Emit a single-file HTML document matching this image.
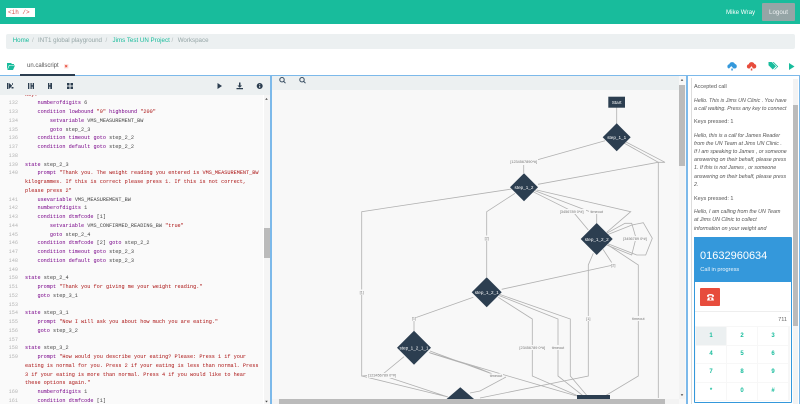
<!DOCTYPE html>
<html><head><meta charset="utf-8">
<style>
html,body{margin:0;padding:0;width:800px;height:404px;overflow:hidden;background:#fff;font-family:"Liberation Sans",sans-serif;}
.a{position:absolute;}
.t{position:absolute;white-space:nowrap;line-height:10px;}
#code{position:absolute;left:0;top:95px;width:263px;height:309px;overflow:hidden;background:#fafafa;font:5.2px/8.75px "Liberation Mono",monospace;color:#444;}
#code .in{position:absolute;left:0;top:-4.3px;width:263px;}
#code .r{position:relative;height:8.75px;white-space:pre;padding-left:25px;}
#code .r u{position:absolute;left:0;width:18px;text-align:right;text-decoration:none;color:#b5b5b5;}
#code b{font-weight:normal;color:#708;}
#code i{font-style:normal;color:#a11;}
.cell{position:absolute;background:#fff;color:#18bc9c;font-size:6px;font-weight:bold;text-align:center;}
.p{position:absolute;left:694px;white-space:nowrap;font-size:5.3px;line-height:8px;color:#555;font-style:italic;}
.p.n{font-style:normal;font-size:5.5px;}
</style></head><body>
<div class="a" style="left:0;top:0;width:800px;height:24px;background:#18bc9c"></div>
<div class="a" style="left:6px;top:8px;width:29px;height:9px;background:#fff"></div>
<div class="t" style="left:8px;top:8px;font:6px/10px 'Liberation Mono',monospace;color:#d9534f">&lt;ih /&gt;</div>
<div class="t" style="left:726px;top:7.5px;font-size:6.2px;color:#fff">Mike Wray</div>
<div class="a" style="left:761.7px;top:3px;width:33.5px;height:18px;background:#95a5a6;border-radius:1px"></div>
<div class="t" style="left:769px;top:7.5px;font-size:6.2px;color:#ecf0f1">Logout</div>

<div class="a" style="left:6px;top:33.7px;width:789px;height:15px;background:#ecf0f1;border-radius:2px"></div>
<div class="t" style="left:12.7px;top:36px;font-size:6.2px;color:#18bc9c">Home</div>
<div class="t" style="left:32px;top:36px;font-size:6.2px;color:#b4bcbc">/</div>
<div class="t" style="left:38px;top:36px;font-size:6.2px;color:#95a5a6">INT1 global playground</div>
<div class="t" style="left:105.5px;top:36px;font-size:6.2px;color:#b4bcbc">/</div>
<div class="t" style="left:112.5px;top:36px;font-size:6.2px;color:#18bc9c">Jims Test UN Project</div>
<div class="t" style="left:171.5px;top:36px;font-size:6.2px;color:#b4bcbc">/</div>
<div class="t" style="left:177.7px;top:36px;font-size:6.2px;color:#95a5a6">Workspace</div>

<!-- tab row icons -->
<svg class="a" style="left:0;top:56px" width="800" height="20" viewBox="0 56 800 20">
<path d="M7 63h4l1 1h2v1H9l-2 5zM9.5 65.5H15l-2 4.5H7.5z" fill="#18bc9c"/>
<rect x="64" y="64" width="4.5" height="4.5" fill="#fde4e1"/><path d="M65.2 65.2l2 2M67.2 65.2l-2 2" stroke="#e74c3c" stroke-width=".8"/>
<path d="M729 68.5a2.2 2.2 0 0 1 .3-4.3a3 3 0 0 1 5.6-.2a2.3 2.3 0 0 1 .1 4.5h-1.5l-2.2-2.4-2.2 2.4zM731.3 68.5h1.5v2h-1.5z" fill="#3498db"/>
<path d="M748.5 68.5a2.2 2.2 0 0 1 .3-4.3a3 3 0 0 1 5.6-.2a2.3 2.3 0 0 1 .1 4.5H753l-1.4-2.4-2 2.4zM750.8 68.5h1.5v2h-1.5z" fill="#e74c3c"/>
<path d="M768.5 62h3.2l4.3 4.3-3.2 3.2-4.3-4.3zM772.5 62l4.6 4.6-3 3 .9-.1 3.2-3-4.6-4.5z" fill="#18bc9c"/>
<path d="M789 63v7l5.5-3.5z" fill="#18bc9c"/>
</svg>
<div class="t" style="left:27px;top:61px;font-size:6px;color:#555">un.callscript</div>
<div class="a" style="left:0;top:75px;width:800px;height:1.3px;background:#7cb9ea"></div>
<div class="a" style="left:20px;top:74.3px;width:54.5px;height:2px;background:#2c3e50"></div>

<!-- editor -->
<div class="a" style="left:0;top:76.3px;width:269.5px;height:18.7px;background:#ecf0f1"></div>
<svg class="a" style="left:0;top:76px" width="270" height="20" viewBox="0 76 270 20" fill="#2c3e50">
<path d="M7 83h1.5v6H7zM9 83l3 2.5v-2.2h1v1.500H12V86l-3 3zM11.500 87h2v1.500h-2z"/>
<path d="M28 83h1.300v6H28zM30.500 83h1.200v2.300h1V83H34v6h-1.300v-2.400h-1V89h-1.200z"/>
<path d="M48 83h1.300v2.300h1V83H52v6h-1.700v-2.400h-1V89H48z"/>
<path d="M67 83h2.500v2.500H67zM70.500 83H73v2.500h-2.500zM67 86.500h2.500V89H67zM70.500 86.500H73V89h-2.500z"/>
<path d="M217.500 83v6l4.500-3z"/>
<path d="M239 82.500h1.500v3h1.600l-2.350 2.200-2.350-2.200H239zM236.500 88h6.500v1.300h-6.500z"/>
<path fill-rule="evenodd" d="M259.700 83a3 3 0 1 1 0 6a3 3 0 0 1 0-6zM259.200 84.200v1h1v-1zM259.200 86v1.700h1V86z"/>
</svg>
<div id="code"><div class="in">
<div class="r"><i>key."</i></div>
<div class="r"><u>132</u>    <b>numberofdigits</b> 6</div>
<div class="r"><u>133</u>    <b>condition lowbound</b> <i>"0"</i> <b>highbound</b> <i>"200"</i></div>
<div class="r"><u>134</u>        <b>setvariable</b> VMS_MEASUREMENT_BW</div>
<div class="r"><u>135</u>        <b>goto</b> step_2_3</div>
<div class="r"><u>136</u>    <b>condition timeout goto</b> step_2_2</div>
<div class="r"><u>137</u>    <b>condition default goto</b> step_2_2</div>
<div class="r"><u>138</u></div>
<div class="r"><u>139</u><b>state</b> step_2_3</div>
<div class="r"><u>140</u>    <b>prompt</b> <i>"Thank you. The weight reading you entered is VMS_MEASUREMENT_BW</i></div>
<div class="r"><i>kilogrammes. If this is correct please press 1. If this is not correct,</i></div>
<div class="r"><i>please press 2"</i></div>
<div class="r"><u>141</u>    <b>usevariable</b> VMS_MEASUREMENT_BW</div>
<div class="r"><u>142</u>    <b>numberofdigits</b> 1</div>
<div class="r"><u>143</u>    <b>condition dtmfcode</b> [1]</div>
<div class="r"><u>144</u>        <b>setvariable</b> VMS_CONFIRMED_READING_BW <i>"true"</i></div>
<div class="r"><u>145</u>        <b>goto</b> step_2_4</div>
<div class="r"><u>146</u>    <b>condition dtmfcode</b> [2] <b>goto</b> step_2_2</div>
<div class="r"><u>147</u>    <b>condition timeout goto</b> step_2_3</div>
<div class="r"><u>148</u>    <b>condition default goto</b> step_2_3</div>
<div class="r"><u>149</u></div>
<div class="r"><u>150</u><b>state</b> step_2_4</div>
<div class="r"><u>151</u>    <b>prompt</b> <i>"Thank you for giving me your weight reading."</i></div>
<div class="r"><u>152</u>    <b>goto</b> step_3_1</div>
<div class="r"><u>153</u></div>
<div class="r"><u>154</u><b>state</b> step_3_1</div>
<div class="r"><u>155</u>    <b>prompt</b> <i>"Now I will ask you about how much you are eating."</i></div>
<div class="r"><u>156</u>    <b>goto</b> step_3_2</div>
<div class="r"><u>157</u></div>
<div class="r"><u>158</u><b>state</b> step_3_2</div>
<div class="r"><u>159</u>    <b>prompt</b> <i>"How would you describe your eating? Please: Press 1 if your</i></div>
<div class="r"><i>eating is normal for you. Press 2 if your eating is less than normal. Press</i></div>
<div class="r"><i>3 if your eating is more than normal. Press 4 if you would like to hear</i></div>
<div class="r"><i>these options again."</i></div>
<div class="r"><u>160</u>    <b>numberofdigits</b> 1</div>
<div class="r"><u>161</u>    <b>condition dtmfcode</b> [1]</div>
</div></div>
<div class="a" style="left:263.5px;top:95px;width:6px;height:309px;background:#f5f5f5"></div>
<div class="a" style="left:263.5px;top:227.7px;width:6px;height:30px;background:#bbb"></div>
<div class="a" style="left:269.5px;top:75px;width:2.5px;height:329px;background:#7cb9ea"></div>

<!-- graph -->
<div class="a" style="left:272px;top:76.3px;width:414px;height:328px;background:#f8f8f8"></div>
<div class="a" style="left:272px;top:76.3px;width:407px;height:13.7px;background:#ecf0f1"></div>
<svg class="a" style="left:272px;top:76px" width="414" height="328" viewBox="272 76 414 328">
<g fill="none" stroke="#34495e" stroke-width="1"><circle cx="282" cy="79.7" r="2.2"/><circle cx="302" cy="79.7" r="2.2"/></g>
<path d="M283.5 81.2l2 2M303.5 81.2l2 2" stroke="#34495e" stroke-width="1"/>
<g fill="none" stroke="#b0b0b0" stroke-width=".8">
<path d="M616.7 107V125"/>
<path d="M605 140.7L536.7 160M523.7 165V173"/>
<path d="M626 142L665 162.3L658.3 162.3V398"/>
<path d="M624 143L658.3 162.3L538 184.3"/>
<path d="M511.7 189L361.7 211.7V376L383 374"/>
<path d="M361.7 376L448 397M404 356.7L383 374M386.7 376.7L448 397"/>
<path d="M515 193.3L486.7 211.7V277"/>
<path d="M533 191.7L573 211.7L588.3 230"/>
<path d="M535 190.7L590 211.7M596.7 214V223"/>
<path d="M536.7 190L630.7 211.7L606.7 232.3"/>
<path d="M606.7 233.3L625 223.3H631.7L636 238L631.7 255L606.7 245"/>
<path d="M606.7 235L632 225L643.3 222.7L652.3 238.3L645.7 255H636.7L606 243"/>
<path d="M593.3 253.3L588.3 265V376L480 398"/>
<path d="M603 249.3L613.3 265L501.7 289.3"/>
<path d="M608 245L638.3 265V376L605 396"/>
<path d="M498.3 297.3L532.3 319V376L578.3 396"/>
<path d="M499 295.5L558 319V376L583.3 396"/>
<path d="M500 294.5L570.3 319V376L587.3 396"/>
<path d="M473.3 297.3L414 318.3V331"/>
<path d="M430 351L495 375M430 353L478 368L495 375"/>
<path d="M429 352.5L508 376L576.7 396"/>
<path d="M506 377L480 391L470 393"/>
</g>
<g font-family="Liberation Sans,sans-serif" font-size="3.8" fill="#777" text-anchor="middle">
<g fill="#f8f8f8"><rect x="509" y="159" width="29" height="5"/><rect x="557" y="209" width="29" height="5"/><rect x="589" y="209" width="15" height="5"/><rect x="622" y="236" width="27" height="5"/><rect x="484.5" y="235.5" width="4.5" height="5"/><rect x="359.5" y="289.5" width="4.5" height="5"/><rect x="586" y="316" width="4.5" height="5"/><rect x="631" y="316" width="14" height="5"/><rect x="518" y="345" width="28" height="5"/><rect x="551" y="345" width="14" height="5"/><rect x="611" y="262.5" width="4.5" height="5"/><rect x="411.7" y="316" width="4.5" height="5"/><rect x="367" y="373" width="30" height="5"/><rect x="489" y="373.5" width="14" height="5"/></g>
<text x="523.7" y="163.2">[1234567890*#]</text>
<text x="571.7" y="213.2">[3456789 0*#]</text>
<text x="596.7" y="213.2">timeout</text>
<text x="635" y="240">[3456789 0*#]</text>
<text x="486.7" y="239.5">[2]</text>
<text x="361.7" y="293.5">[1]</text>
<text x="588.3" y="320">[1]</text>
<text x="638.3" y="320">timeout</text>
<text x="532.3" y="349">[23456789 0*#]</text>
<text x="558" y="349">timeout</text>
<text x="613.3" y="266.5">[2]</text>
<text x="414" y="319.7">[1]</text>
<text x="382" y="376.7">[123456789 0*#]</text>
<text x="496" y="377">timeout</text>
</g>
<g fill="#2c3e50">
<rect x="608.3" y="96.7" width="16.7" height="11"/>
<path d="M616.7 123.3l14 14-14 14-14-14z"/>
<path d="M524 173.3l14 14-14 14-14-14z"/>
<path d="M596.7 223l16 16-16 16-16-16z"/>
<path d="M486.7 277.3l15 15-15 15-15-15z"/>
<path d="M414 330.7l17 17-17 17-17-17z"/>
<path d="M460.3 387.3l14 12h-28z"/>
<rect x="577" y="395" width="33" height="4"/>
</g>
<g font-family="Liberation Sans,sans-serif" font-size="4.6" fill="#fff" text-anchor="middle">
<text x="616.7" y="104">Start</text>
<text x="616.7" y="139">step_1_1</text>
<text x="524" y="189">step_1_2</text>
<text x="596.7" y="240.8">step_1_2_2</text>
<text x="486.7" y="294">step_1_2_1</text>
<text x="414" y="349.5">step_1_2_1_1</text>
</g>
</svg>
<div class="a" style="left:679.3px;top:85px;width:5.7px;height:314px;background:#f3f3f3"></div>
<div class="a" style="left:679.3px;top:85px;width:5.7px;height:80.7px;background:#bbb"></div>
<div class="a" style="left:272px;top:399.3px;width:407px;height:4.7px;background:#f3f3f3"></div>
<div class="a" style="left:279.3px;top:399.3px;width:385.7px;height:4.7px;background:#bbb"></div>
<div class="a" style="left:686px;top:75px;width:2.3px;height:329px;background:#7cb9ea"></div>
<div class="a" style="left:799.3px;top:75px;width:.7px;height:329px;background:#7cb9ea"></div>
<svg class="a" style="left:0;top:0" width="800" height="404" viewBox="0 0 800 404" fill="#444">
<path d="M266.500 98l-1.300 1.800h2.600zM682 79l-1.300 1.800h2.600zM796 79.500l-1.300 1.800h2.600zM266.500 402.500l-1.300-1.800h2.600zM682 396l-1.300-1.800h2.600zM796 402.500l-1.300-1.800h2.600z"/>
</svg>

<!-- right panel -->
<div class="a" style="left:691.3px;top:78px;width:1px;height:326px;background:#ddd"></div>
<div class="a" style="left:793px;top:79px;width:5px;height:325px;background:#f3f3f3"></div>
<div class="a" style="left:793px;top:105px;width:5px;height:221px;background:#bbb"></div>
<div class="p n" style="top:83px">Accepted call</div>
<div class="p" style="top:96.700px">Hello. This is Jims UN Clinic . You have</div>
<div class="p" style="top:105px">a call waiting. Press any key to connect</div>
<div class="p n" style="top:118.300px">Keys pressed: 1</div>
<div class="p" style="top:131.700px">Hello, this is a call for James Reader</div>
<div class="p" style="top:139.800px">from the UN Team at Jims UN Clinic .</div>
<div class="p" style="top:148px">If I am speaking to James , or someone</div>
<div class="p" style="top:156.200px">answering on their behalf, please press</div>
<div class="p" style="top:164.400px">1. If this is not James , or someone</div>
<div class="p" style="top:172.600px">answering on their behalf, please press</div>
<div class="p" style="top:180.800px">2.</div>
<div class="p n" style="top:194.700px">Keys pressed: 1</div>
<div class="p" style="top:208px">Hello, I am calling from the UN Team</div>
<div class="p" style="top:216.400px">at Jims UN Clinic to collect</div>
<div class="p" style="top:224.700px">information on your weight and</div>

<div class="a" style="left:694.300px;top:237px;width:95.700px;height:163.500px;background:#fff;border:.5px solid #3498db;border-radius:1px"></div>
<div class="a" style="left:694.300px;top:237px;width:96.500px;height:44.700px;background:#3498db"></div>
<div class="t" style="left:700px;top:250.500px;font-size:11px;color:#fff">01632960634</div>
<div class="t" style="left:700.300px;top:264.500px;font-size:5.600px;color:#ecf5fb">Call in progress</div>
<div class="a" style="left:700.300px;top:288px;width:20px;height:18px;background:#e74c3c;border-radius:1px"></div>
<svg class="a" style="left:700px;top:288px" width="21" height="18" viewBox="0 0 21 18"><path d="M7 7.500c1-2 6-2 7 0v1.300h-2V7.500h-3v1.300H7zM8 9.500h5l1 3H7zM10.500 10a1 1 0 1 0 .01 0z" fill="#fff" fill-rule="evenodd"/></svg>
<div class="a" style="left:695px;top:311px;width:95px;height:.6px;background:#eee"></div>
<div class="t" style="left:776px;top:314.500px;width:11px;text-align:right;font-size:5.600px;color:#666">711</div>
<div class="a" style="left:695px;top:326px;width:95px;height:74.500px;background:#f7f7f7"></div>

<div class="cell" style="left:696px;top:327px;width:30px;height:18px;line-height:18px;background:#ecf0f1">1</div>
<div class="cell" style="left:727.300px;top:327px;width:29.400px;height:18px;line-height:18px">2</div>
<div class="cell" style="left:758px;top:327px;width:30px;height:18px;line-height:18px">3</div>
<div class="cell" style="left:696px;top:346px;width:30px;height:17px;line-height:17px">4</div>
<div class="cell" style="left:727.300px;top:346px;width:29.400px;height:17px;line-height:17px">5</div>
<div class="cell" style="left:758px;top:346px;width:30px;height:17px;line-height:17px">6</div>
<div class="cell" style="left:696px;top:364px;width:30px;height:17.700px;line-height:17.700px">7</div>
<div class="cell" style="left:727.300px;top:364px;width:29.400px;height:17.700px;line-height:17.700px">8</div>
<div class="cell" style="left:758px;top:364px;width:30px;height:17.700px;line-height:17.700px">9</div>
<div class="cell" style="left:696px;top:382.700px;width:30px;height:17.300px;line-height:17.300px">*</div>
<div class="cell" style="left:727.300px;top:382.700px;width:29.400px;height:17.300px;line-height:17.300px">0</div>
<div class="cell" style="left:758px;top:382.700px;width:30px;height:17.300px;line-height:17.300px">#</div>
</body></html>
